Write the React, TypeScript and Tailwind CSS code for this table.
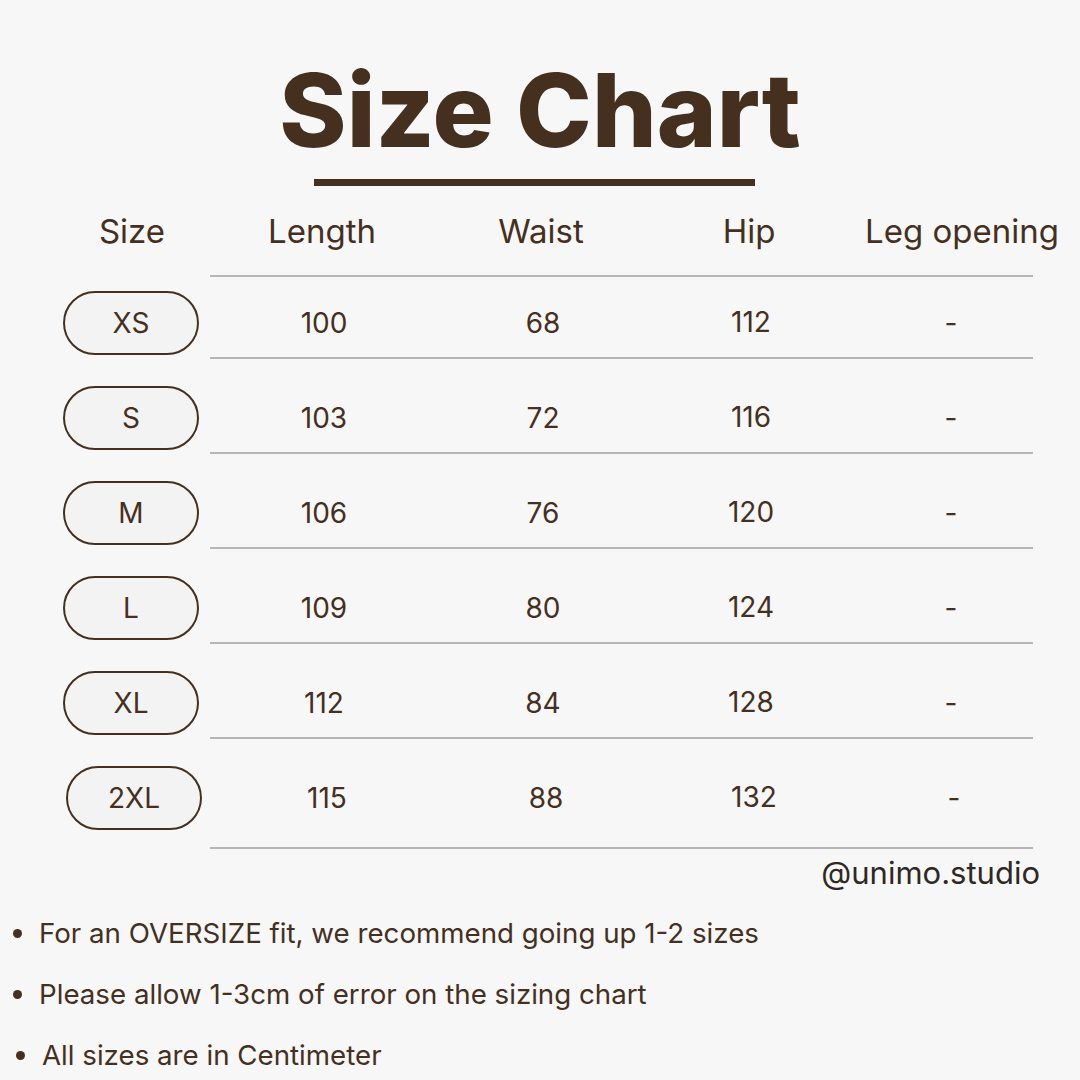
const rows = [
  { size: "XS", length: "100", waist: "68", hip: "112" },
  { size: "S", length: "103", waist: "72", hip: "116" },
  { size: "M", length: "106", waist: "76", hip: "120" },
  { size: "L", length: "109", waist: "80", hip: "124" },
  { size: "XL", length: "112", waist: "84", hip: "128" },
  { size: "2XL", length: "115", waist: "88", hip: "132" },
];

const notes = [
  "For an OVERSIZE fit, we recommend going up 1-2 sizes",
  "Please allow 1-3cm of error on the sizing chart",
  "All sizes are in Centimeter",
];

function Rule({ className = "" }: { className?: string }) {
  return <div className={`ml-[210px] h-[2px] w-[823px] bg-[#b6b6b6] ${className}`} />;
}

export default function App() {
  return (
    <div className="h-[1080px] w-[1080px] overflow-hidden bg-[#f7f7f7] font-['Inter',sans-serif] text-[#45301f]">
      <h1 className="pt-[59px] text-center text-[102px] font-extrabold leading-none tracking-[0px] text-[#45301f]">
        Size Chart
      </h1>
      <div className="ml-[314px] mt-[18px] h-[7px] w-[441px] bg-[#45301f]" />

      {/* header */}
      <div className="mt-[14px] grid h-[64px] grid-cols-[210px_228px_210px_206px_194px] items-center text-center text-[33px]">
        <div className="pl-[54px]">Size</div>
        <div className="pr-[4px]">Length</div>
        <div className="pr-[4px]">Waist</div>
        <div className="pr-[4px]">Hip</div>
        <div className="whitespace-nowrap pl-[11px] text-left">Leg opening</div>
      </div>
      <Rule className="mt-[11px]" />

      {rows.map((r, i) => (
        <div key={r.size}>
          <div
            className={`grid h-[64px] grid-cols-[210px_228px_210px_206px_194px] items-center text-center text-[28px] ${
              i === 0 ? "mt-[14px]" : "mt-[27px]"
            } ${i === 5 ? "ml-[3px]" : ""}`}
          >
            <div className="flex justify-center pl-[52px]">
              <div className="flex h-[64px] w-[136px] items-center justify-center rounded-full border-2 border-[#45301f] bg-[#f3f3f3]">
                {r.size}
              </div>
            </div>
            <div>{r.length}</div>
            <div>{r.waist}</div>
            <div className="-translate-y-[1px]">{r.hip}</div>
            <div>-</div>
          </div>
          <Rule className={i === 5 ? "mt-[17px]" : "mt-[2px]"} />
        </div>
      ))}

      <div className="mt-[6px] pr-[40px] text-right text-[31px] leading-[36px] text-[#2f2825]">
        @unimo.studio
      </div>

      <ul className="mt-[12px]">
        {notes.map((n, i) => (
          <li
            key={n}
            className={`flex h-[61px] items-center gap-[17px] text-[27.7px] ${i === 2 ? "pl-[16px]" : "pl-[13px]"}`}
          >
            <span className="h-[9px] w-[9px] rounded-full bg-[#45301f]" />
            <span>{n}</span>
          </li>
        ))}
      </ul>
    </div>
  );
}
